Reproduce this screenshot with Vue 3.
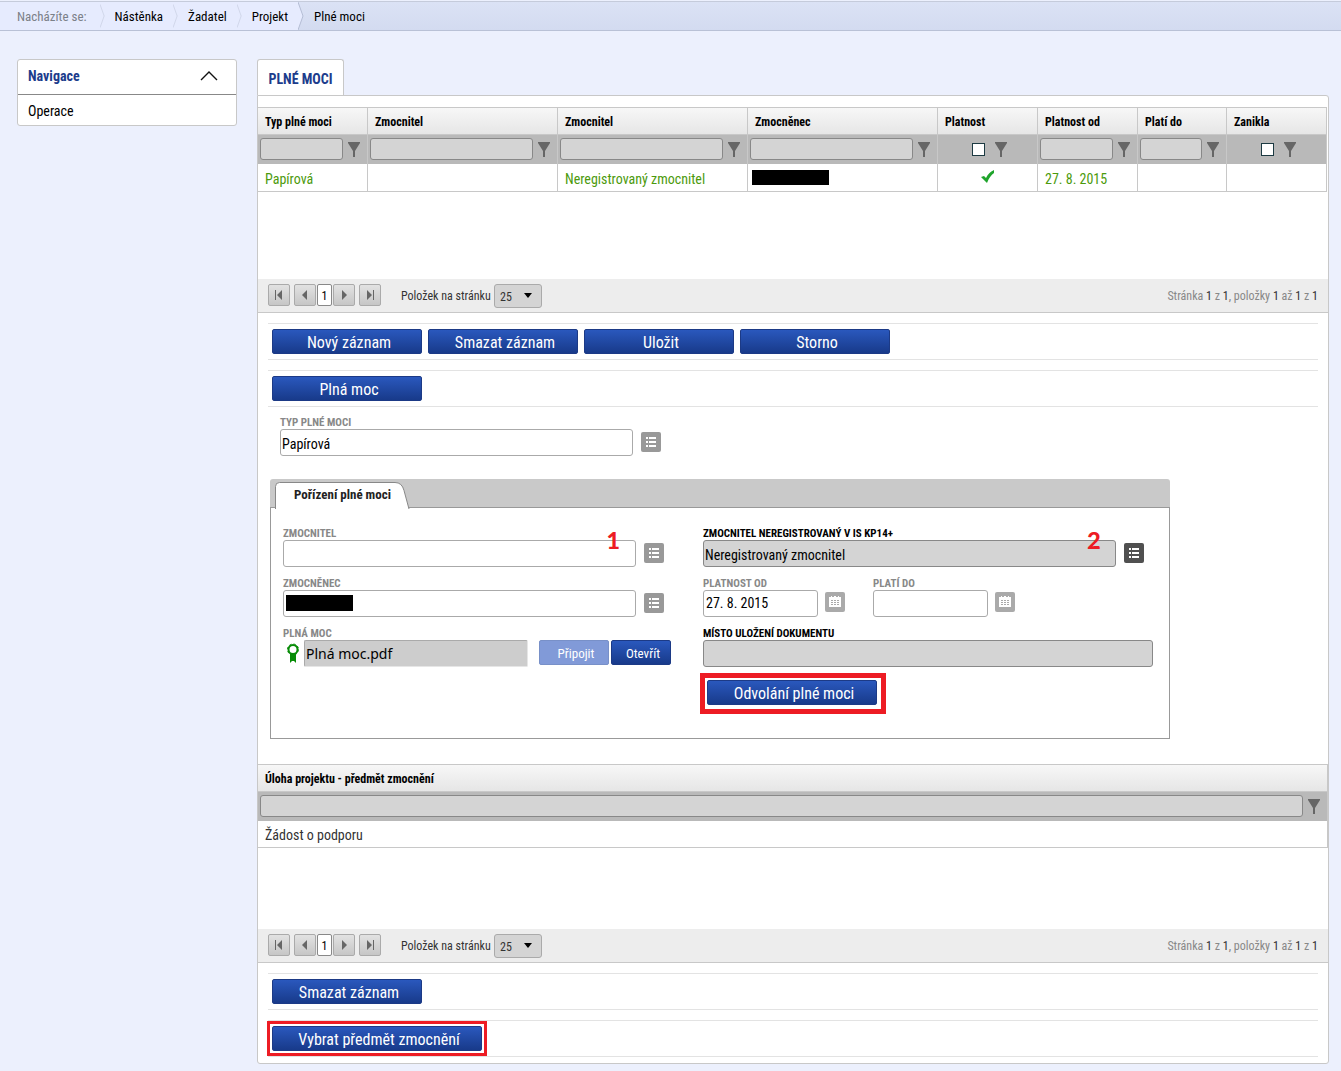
<script setup>
import { h } from 'vue'

const crumbs = ['Nástěnka', 'Žadatel', 'Projekt']

const columns = [
  { id: 'typ', label: 'Typ plné moci', cls: 'col-110', value: 'Papírová' },
  { id: 'zmocnitel', label: 'Zmocnitel', cls: '', value: '' },
  { id: 'zmocnitel-nereg', label: 'Zmocnitel', cls: '', value: 'Neregistrovaný zmocnitel' },
  { id: 'zmocnenec', label: 'Zmocněnec', cls: '', hidden: true },
  { id: 'platnost', label: 'Platnost', cls: 'col-100', check: true, ticked: true },
  { id: 'platnost-od', label: 'Platnost od', cls: 'col-100', value: '27. 8. 2015' },
  { id: 'plati-do', label: 'Platí do', cls: 'col-89', value: '' },
  { id: 'zanikla', label: 'Zanikla', cls: 'col-100', check: true },
]

const FunnelIcon = () =>
  h('svg', { width: 12, height: 15, viewBox: '0 0 12 15', fill: '#666', 'aria-hidden': 'true' }, [
    h('path', { d: 'M0 0h12v1l-5 8v6H5V9L0 1z' }),
  ])

const ListIcon = () =>
  h('svg', { width: 20, height: 20, viewBox: '0 0 20 20', fill: '#fff', 'aria-hidden': 'true' }, [
    h('path', { d: 'M5 5h2v2H5zM8 5h7v2H8zM5 9h2v2H5zM8 9h7v2H8zM5 13h2v2H5zM8 13h7v2H8z' }),
  ])

const CalendarIcon = () =>
  h('svg', { width: 20, height: 20, viewBox: '0 0 20 20', 'aria-hidden': 'true' }, [
    h('path', { fill: '#fff', d: 'M4 5h2V4h1v1h2V4h2v1h2V4h1v1h2v10H4z' }),
    h('path', {
      fill: '#aaa',
      d: 'M6 8h2v1H6zM9 8h2v1H9zM12 8h2v1h-2zM6 10h2v1H6zM9 10h2v1H9zM12 10h2v1h-2zM6 12h2v1H6zM9 12h2v1H9zM12 12h2v1h-2z',
    }),
  ])

const arrows = {
  first: 'M7 6h1v10H7zM14 6v10l-5-5z',
  prev: 'M13 6v10l-5-5z',
  next: 'M9 6v10l5-5z',
  last: 'M8 6v10l5-5zM14 6h1v10h-1z',
}

const PagerButton = (props) =>
  h('button', { type: 'button', class: 'pager-btn', 'aria-label': props.label }, [
    h('svg', { width: 20, height: 20, viewBox: '1 1 20 20', fill: '#666' }, [h('path', { d: arrows[props.kind] })]),
  ])
PagerButton.props = ['kind', 'label']

const GridPager = (props) =>
  h('div', { class: 'pager' }, [
    h(PagerButton, { kind: 'first', label: 'První' }),
    h(PagerButton, { kind: 'prev', label: 'Předchozí', class: 'gap-4' }),
    h('span', { class: 'pager-page' }, '1'),
    h(PagerButton, { kind: 'next', label: 'Další' }),
    h(PagerButton, { kind: 'last', label: 'Poslední', class: 'gap-4' }),
    h('label', { class: 'pager-label', for: props.name }, 'Položek na stránku'),
    h('span', { class: 'pager-select' }, [
      h('select', { id: props.name }, [h('option', '25')]),
      h('svg', { width: 8, height: 5, viewBox: '0 0 8 5' }, [h('path', { d: 'M0 0h8L4 5z' })]),
    ]),
    h('span', { class: 'pager-info' }, [
      'Stránka ', h('b', '1'), ' z ', h('b', '1'), ', položky ', h('b', '1'), ' až ', h('b', '1'), ' z ', h('b', '1'),
    ]),
  ])
GridPager.props = ['name']
</script>

<template>
  <div class="page">
    <nav class="crumbs" aria-label="Drobečková navigace">
      <span class="crumb lead">Nacházíte se:</span>
      <template v-for="c in crumbs" :key="c">
        <svg class="chevron" width="6" height="28" viewBox="0 0 6 28"><path d="M0 0l5 14-5 14" fill="none" stroke="#cdd3e6" /></svg>
        <a class="crumb" href="#">{{ c }}</a>
      </template>
      <span class="crumb current">
        <svg class="point" width="6" height="28" viewBox="0 0 6 28"><path d="M0 0l5 14-5 14z" fill="#e6ebfe" /><path d="M0 0l5 14-5 14" fill="none" stroke="#b4bdd4" /></svg>
        Plné moci
      </span>
    </nav>

    <div class="layout">
      <aside class="side">
        <button type="button" class="side-head">
          Navigace
          <svg width="18" height="11" viewBox="0 0 18 11"><path d="M1 10l8-8 8 8" fill="none" stroke="#111" stroke-width="1.4" /></svg>
        </button>
        <a class="side-item" href="#">Operace</a>
      </aside>

      <main class="main">
        <h1 class="tab">PLNÉ MOCI</h1>
        <div class="panel">
          <div class="grid-area">
            <table class="grid">
              <colgroup><col v-for="c in columns" :key="c.id" :class="c.cls" /></colgroup>
              <thead>
                <tr><th v-for="c in columns" :key="c.id" scope="col">{{ c.label }}</th></tr>
                <tr class="filters">
                  <td v-for="c in columns" :key="c.id">
                    <div class="filter" :class="{ boxed: c.check }">
                      <input v-if="c.check" type="checkbox" :aria-label="'Filtr ' + c.label" />
                      <input v-else type="text" :aria-label="'Filtr ' + c.label" />
                      <FunnelIcon />
                    </div>
                  </td>
                </tr>
              </thead>
              <tbody>
                <tr>
                  <td v-for="c in columns" :key="c.id" :class="{ tight: c.hidden, center: c.ticked }">
                    <span v-if="c.hidden" class="redacted wide"></span>
                    <svg v-else-if="c.ticked" width="14" height="13" viewBox="0 0 14 13"><path d="M0 7l3-1 2 2c2-4 4-6 8-8v3c-3 2-5 5-7 10z" fill="#1fa42c" /></svg>
                    <template v-else>{{ c.value }}</template>
                  </td>
                </tr>
              </tbody>
            </table>
          </div>
          <GridPager name="size-top" />

          <div class="toolbar">
            <button type="button" class="btn">Nový záznam</button>
            <button type="button" class="btn">Smazat záznam</button>
            <button type="button" class="btn">Uložit</button>
            <button type="button" class="btn">Storno</button>
          </div>
          <div class="toolbar">
            <button type="button" class="btn">Plná moc</button>
          </div>

          <div class="field type-field">
            <label for="typ-pm">TYP PLNÉ MOCI</label>
            <div class="line">
              <input id="typ-pm" type="text" class="box w-353" value="Papírová" />
              <button type="button" class="icon-btn" aria-label="Vybrat typ"><ListIcon /></button>
            </div>
          </div>

          <section class="card">
            <div class="card-tabs">
              <svg class="tab-shape" width="136" height="27" viewBox="0 0 136 27"><path d="M.5 27V4.500q0-4 4-4H120q7 0 9 8l5 18.500" fill="#fff" stroke="#888" /></svg>
              <h2>Pořízení plné moci</h2>
            </div>
            <div class="card-body">
              <div class="col-left">
                <div class="field">
                  <label for="zmoc">ZMOCNITEL</label>
                  <div class="line">
                    <input id="zmoc" type="text" class="box w-353" />
                    <button type="button" class="icon-btn" aria-label="Vybrat zmocnitele"><ListIcon /></button>
                    <span class="mark mark-one">1</span>
                  </div>
                </div>
                <div class="field">
                  <label for="zmocnenec">ZMOCNĚNEC</label>
                  <div class="line">
                    <input id="zmocnenec" type="text" class="box w-353" />
                    <span class="redacted cover"></span>
                    <button type="button" class="icon-btn" aria-label="Vybrat zmocněnce"><ListIcon /></button>
                  </div>
                </div>
                <div class="field">
                  <label for="soubor">PLNÁ MOC</label>
                  <div class="line">
                    <svg class="ribbon" width="14" height="21" viewBox="0 0 14 21">
                      <path d="M4 10h6v10l-2-2H6l-2 2z" fill="#088c08" />
                      <circle cx="7" cy="6.500" r="4.500" fill="#fff" stroke="#088c08" stroke-width="2" />
                      <circle cx="7" cy="6.500" r="5.500" fill="none" stroke="#088c08" stroke-dasharray="2.200 2.100" />
                    </svg>
                    <input id="soubor" type="text" class="file" value="Plná moc.pdf" readonly />
                    <button type="button" class="btn small attach" disabled>Připojit</button>
                    <button type="button" class="btn small open">Otevřít</button>
                  </div>
                </div>
              </div>
              <div class="col-right">
                <div class="field strong">
                  <label for="nereg">ZMOCNITEL NEREGISTROVANÝ V IS KP14+</label>
                  <div class="line">
                    <input id="nereg" type="text" class="box grey w-413" value="Neregistrovaný zmocnitel" readonly />
                    <button type="button" class="icon-btn dark" aria-label="Vybrat neregistrovaného"><ListIcon /></button>
                    <span class="mark mark-two">2</span>
                  </div>
                </div>
                <div class="dates">
                  <div class="field">
                    <label for="od">PLATNOST OD</label>
                    <div class="line">
                      <input id="od" type="text" class="box date w-115" value="27. 8. 2015" />
                      <button type="button" class="icon-btn cal" aria-label="Kalendář"><CalendarIcon /></button>
                    </div>
                  </div>
                  <div class="field">
                    <label for="do">PLATÍ DO</label>
                    <div class="line">
                      <input id="do" type="text" class="box date w-115" />
                      <button type="button" class="icon-btn cal" aria-label="Kalendář"><CalendarIcon /></button>
                    </div>
                  </div>
                </div>
                <div class="field strong">
                  <label for="misto">MÍSTO ULOŽENÍ DOKUMENTU</label>
                  <div class="line"><input id="misto" type="text" class="box grey w-450" readonly /></div>
                </div>
                <div class="framed revoke"><button type="button" class="btn w-170">Odvolání plné moci</button></div>
              </div>
            </div>
          </section>

          <div class="grid-area second">
            <table class="grid">
              <thead>
                <tr><th scope="col">Úloha projektu - předmět zmocnění</th></tr>
                <tr class="filters">
                  <td><div class="filter"><input type="text" aria-label="Filtr úlohy" /><FunnelIcon /></div></td>
                </tr>
              </thead>
              <tbody class="plain"><tr><td>Žádost o podporu</td></tr></tbody>
            </table>
          </div>
          <GridPager name="size-bottom" />
          <div class="toolbar">
            <button type="button" class="btn">Smazat záznam</button>
          </div>
          <div class="toolbar">
            <div class="framed pick"><button type="button" class="btn w-210">Vybrat předmět zmocnění</button></div>
          </div>
        </div>
      </main>
    </div>
  </div>
</template>

<style>
body {
  background: #ecf0fd;
}
.pager {
  display: flex;
  align-items: flex-start;
  height: 34px;
  padding: 5px 10px 0;
  background: #ededed;
  border-bottom: 1px solid #c8c8c8;
  font-size: 12px;
  line-height: 24px;
  color: #333;
}
.pager-btn {
  width: 22px;
  height: 22px;
  padding: 0;
  border: 1px solid #aaa;
  border-radius: 2px;
  background: linear-gradient(#e2e2e2, #c6c6c6);
}
.pager-btn svg {
  display: block;
}
.pager .gap-4 {
  margin-left: 4px;
}
.pager-page {
  width: 15px;
  margin: 0 1px;
  height: 22px;
  line-height: 22px;
  border: 1px solid #888;
  border-radius: 2px;
  background: #fff;
  color: #000;
  text-align: center;
}
.pager-label {
  width: 93px;
  margin-left: 20px;
  white-space: nowrap;
}
.pager-select {
  position: relative;
}
.pager-select select {
  display: block;
  appearance: none;
  width: 48px;
  height: 24px;
  padding: 0 5px;
  border: 1px solid #aaa;
  border-radius: 3px;
  background: #d4d4d4;
  color: #333;
  font: inherit;
}
.pager-select svg {
  position: absolute;
  right: 10px;
  top: 9px;
  pointer-events: none;
}
.pager-info {
  margin-left: auto;
  color: #888;
}
.pager-info b {
  color: #333;
  font-weight: 400;
}
</style>

<style scoped>
.page,
.page :deep(*) {
  box-sizing: border-box;
}
.page {
  font-family: "Roboto Condensed", "Liberation Sans Narrow", Roboto, sans-serif;
  font-size: 14px;
  color: #000;
  padding-bottom: 7px;
}
.page button,
.page input {
  font-family: inherit;
}
a {
  color: inherit;
  text-decoration: none;
}
.crumbs {
  display: flex;
  height: 31px;
  border-bottom: 1px solid #b9c1d6;
  background: #e6ebfe;
  box-shadow: inset 0 1px #ecf0fd, inset 0 2px #c5cbdb;
  padding-top: 2px;
  font-size: 13px;
  line-height: 30px;
  white-space: nowrap;
}
.crumb {
  height: 28px;
  padding: 0 10px;
}
.crumb.lead {
  padding: 0 13px 0 17px;
  color: #7b8088;
}
.crumb.current {
  position: relative;
  flex: 1;
  padding-left: 16px;
  background: linear-gradient(#dbe2f5, #d3dbf0);
}
.chevron {
  width: 5px;
}
.point {
  position: absolute;
  left: 0;
  top: 0;
}
.layout {
  display: flex;
  align-items: flex-start;
  gap: 20px;
  padding: 28px 12px 0 17px;
}
.side {
  flex: none;
  width: 220px;
  border: 1px solid #c8c8c8;
  border-radius: 3px;
  background: #fff;
}
.side-head {
  display: flex;
  align-items: center;
  justify-content: space-between;
  width: 100%;
  height: 35px;
  padding: 0 18px 2px 10px;
  border: 0;
  border-bottom: 1px solid #888;
  background: none;
  color: #1c3c8c;
  font-size: 14px;
  font-weight: 700;
}
.side-head svg {
  margin-bottom: 2px;
}
.side-item {
  display: block;
  padding: 0 10px;
  height: 30px;
  line-height: 33px;
}
.main {
  flex: 1;
  min-width: 0;
}
.tab {
  position: relative;
  width: 87px;
  height: 36px;
  margin: 0;
  border: 1px solid #c8c8c8;
  border-bottom: 0;
  border-radius: 3px 3px 0 0;
  background: #fff;
  color: #1c3c8c;
  font-size: 14px;
  line-height: 38px;
  text-align: center;
  white-space: nowrap;
}
.panel {
  padding: 11px 0 6px;
  border: 1px solid #c8c8c8;
  border-radius: 0 3px 3px 3px;
  background: #fff;
}
.grid-area {
  min-height: 172px;
  padding-right: 1px;
}
.grid-area.second {
  min-height: 165px;
  margin-top: 25px;
  padding-right: 0;
}
.grid {
  width: 100%;
  border-collapse: separate;
  border-spacing: 0;
  table-layout: fixed;
}
.col-110 {
  width: 110px;
}
.col-100 {
  width: 100px;
}
.col-89 {
  width: 89px;
}
.grid th,
.grid td {
  padding: 0 7px;
  border-right: 1px solid #c8c8c8;
  text-align: left;
  white-space: nowrap;
}
.grid th {
  height: 28px;
  padding-top: 2px;
  border-top: 1px solid #c8c8c8;
  border-bottom: 1px solid #c8c8c8;
  background: linear-gradient(#f7f7f7, #e6e6e6);
  font-size: 12px;
}
.grid .filters td {
  height: 29px;
  padding: 0;
  border-right-color: #c8c8c8;
  background: #b9b9b9;
}
.filter {
  display: flex;
  align-items: center;
  gap: 5px;
  padding: 0 7px 1px 2px;
}
.filter.boxed {
  gap: 10px;
  padding-left: 34px;
}
.filter svg {
  flex: none;
}
.filter input[type="text"] {
  flex: 1;
  min-width: 0;
  height: 22px;
  border: 1px solid #888;
  border-radius: 3px;
  background: #d4d4d4;
}
.filter input[type="checkbox"] {
  appearance: none;
  width: 13px;
  height: 13px;
  margin: 0;
  border: 1px solid #1c3a42;
  background: #fff;
}
.grid tbody td {
  height: 28px;
  padding-top: 3px;
  border-bottom: 1px solid #c8c8c8;
  color: #4c9a0c;
}
.grid tbody.plain td {
  height: 27px;
  padding-top: 2px;
  color: #333;
}
.grid tbody .tight {
  padding: 0 4px;
}
.grid tbody .center {
  padding: 0 0 4px;
  text-align: center;
}
.center svg {
  vertical-align: middle;
}
.redacted {
  display: block;
  background: #000;
}
.redacted.wide {
  width: 77px;
  height: 15px;
}
.redacted.cover {
  position: absolute;
  left: 3px;
  top: 5px;
  width: 67px;
  height: 16px;
}
.toolbar {
  display: flex;
  flex-wrap: wrap;
  gap: 6px;
  margin: 10px 10px 0;
  padding: 5px 4px;
  border-top: 1px solid #e3e3e3;
  border-bottom: 1px solid #e3e3e3;
}
.btn {
  width: 150px;
  height: 25px;
  padding: 2px 0 0 4px;
  border: 1px solid #1c3a86;
  border-radius: 2px;
  background: linear-gradient(#2a58bd, #183a8a);
  color: #fff;
  font-size: 16px;
  line-height: 21px;
  white-space: nowrap;
}
.btn.w-170 {
  width: 170px;
}
.btn.w-210 {
  width: 210px;
}
.btn.small {
  font-size: 13px;
}
.btn.attach {
  width: 70px;
  margin-left: 11px;
  border-color: #7890c8;
  background: #819ad8;
}
.btn.open {
  width: 60px;
  margin-left: 2px;
}
.framed {
  position: relative;
  display: flex;
}
.framed::after {
  content: "";
  position: absolute;
  pointer-events: none;
}
.framed.pick::after {
  inset: -5px;
  border: 3px solid #ed1c24;
}
.framed.revoke {
  width: 170px;
  margin: 3px 0 0 4px;
}
.framed.revoke::after {
  inset: -7px -9px -9px -7px;
  border: 5px solid #ed1c24;
}
.field label {
  display: block;
  height: 13px;
  color: #888;
  font-size: 11px;
  font-weight: 700;
  line-height: 13px;
  white-space: nowrap;
}
.field.strong label {
  color: #000;
}
.type-field {
  margin: 9px 0 0 22px;
}
.line {
  position: relative;
  display: flex;
  align-items: flex-start;
  height: 27px;
}
.box {
  height: 27px;
  padding: 2px 1px 0;
  border: 1px solid #aaa;
  border-radius: 3px;
  background: #fff;
  color: #000;
  font-size: 14px;
}
.box.grey {
  border-color: #888;
  background: #d4d4d4;
}
.box.date {
  padding: 0 2px 1px;
}
.w-353 {
  width: 353px;
}
.w-413 {
  width: 413px;
}
.w-115 {
  width: 115px;
}
.w-450 {
  width: 450px;
}
.icon-btn {
  width: 20px;
  height: 20px;
  margin: 3px 0 0 8px;
  padding: 0;
  border: 0;
  border-radius: 2px;
  background: #999;
}
.icon-btn svg {
  display: block;
}
.icon-btn.dark {
  background: #505050;
}
.icon-btn.cal {
  margin: 2px 0 0 7px;
  background: #aaa;
}
.card {
  max-width: 900px;
  margin: 23px 12px 0;
}
.card-tabs {
  position: relative;
  height: 28px;
  padding-left: 24px;
  border-radius: 3px 3px 0 0;
  background: #c9c9c9;
}
.tab-shape {
  position: absolute;
  left: 5px;
  top: 3px;
}
.card-tabs h2 {
  position: relative;
  margin: 0;
  font-size: 13px;
  line-height: 31px;
  color: #222;
}
.card-body {
  display: flex;
  min-height: 232px;
  padding: 19px 12px 0;
  border: 1px solid #999;
}
.col-left {
  flex: none;
  width: 420px;
}
.col-left,
.col-right {
  display: flex;
  flex-direction: column;
  gap: 10px;
}
.dates {
  display: flex;
  gap: 28px;
}
.ribbon {
  margin: 3px 4px 0 3px;
}
.file {
  width: 224px;
  height: 27px;
  padding: 0 1px;
  border: 1px solid #aaa;
  border-right-color: #e6e6e6;
  border-bottom-color: #e6e6e6;
  border-radius: 2px;
  background: #cdcdcd;
}
.line .file {
  font-family: "Noto Sans", sans-serif;
  font-size: 14px;
}
.mark {
  position: absolute;
  top: -16px;
  color: #ed1c24;
  font: 900 27px/32px Carlito, Lato, sans-serif;
}
.mark-one {
  left: 323px;
}
.mark-two {
  left: 384px;
}
</style>
